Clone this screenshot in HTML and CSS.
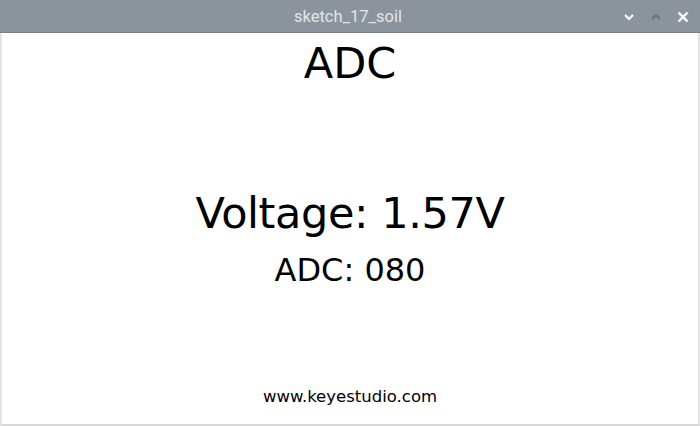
FILE: index.html
```html
<!DOCTYPE html>
<html>
<head>
<meta charset="utf-8">
<link rel="stylesheet" href="styles.css">
</head>
<body>
<div class="window">
  <div class="titlebar">
    <div class="title">sketch_17_soil</div>
    <div class="controls">
      <svg class="ctl" width="14" height="14" viewBox="0 0 14 14"><path d="M3 5 L7 9 L11 5" fill="none" stroke="#ffffff" stroke-width="2.2"/></svg>
      <svg class="ctl" width="14" height="14" viewBox="0 0 14 14"><path d="M3 9 L7 5 L11 9" fill="none" stroke="#6a7178" stroke-width="2.2"/></svg>
      <svg class="ctl" width="14" height="14" viewBox="0 0 14 14"><path d="M2.5 2.5 L11.5 11.5 M11.5 2.5 L2.5 11.5" fill="none" stroke="#ffffff" stroke-width="2.4"/></svg>
    </div>
  </div>
  <div class="canvas">
    <div class="heading">ADC</div>
    <div class="voltage">Voltage: 1.57V</div>
    <div class="adc">ADC: 080</div>
    <div class="footer">www.keyestudio.com</div>
  </div>
</div>
</body>
</html>
```

FILE: styles.css
```css
html, body {
  margin: 0;
  padding: 0;
  width: 700px;
  height: 426px;
  overflow: hidden;
  background: #ffffff;
}
.window {
  width: 700px;
  height: 426px;
  display: flex;
  flex-direction: column;
  box-sizing: border-box;
}
.titlebar {
  height: 32px;
  background: #8b949d;
  border-bottom: 1px solid #767e86;
  position: relative;
  flex: none;
  display: flex;
  align-items: center;
  justify-content: center;
}
.title {
  font-family: Roboto, "Liberation Sans", sans-serif;
  font-size: 16.5px;
  color: #e3e5e7;
  line-height: 32px;
  padding-top: 2px;
  padding-right: 4px;
}
.controls {
  position: absolute;
  right: 10px;
  top: 10px;
  display: flex;
  gap: 13px;
}
.ctl {
  display: block;
}
.canvas {
  flex: 1;
  display: flex;
  flex-direction: column;
  align-items: center;
  border-left: 2px solid #e4e4e4;
  border-right: 2px solid #e4e4e4;
  border-bottom: 2px solid #d8d8d8;
  font-family: "DejaVu Sans", sans-serif;
  color: #000000;
  padding-bottom: 19px;
}
.heading {
  font-size: 43px;
  line-height: 43px;
  margin-top: 8.5px;
}
.voltage {
  font-size: 43px;
  line-height: 43px;
  letter-spacing: -0.4px;
  margin-top: 107px;
}
.adc {
  font-size: 32px;
  line-height: 32px;
  margin-top: 19px;
}
.footer {
  margin-top: auto;
  font-size: 16.5px;
  line-height: 17px;
}
```
